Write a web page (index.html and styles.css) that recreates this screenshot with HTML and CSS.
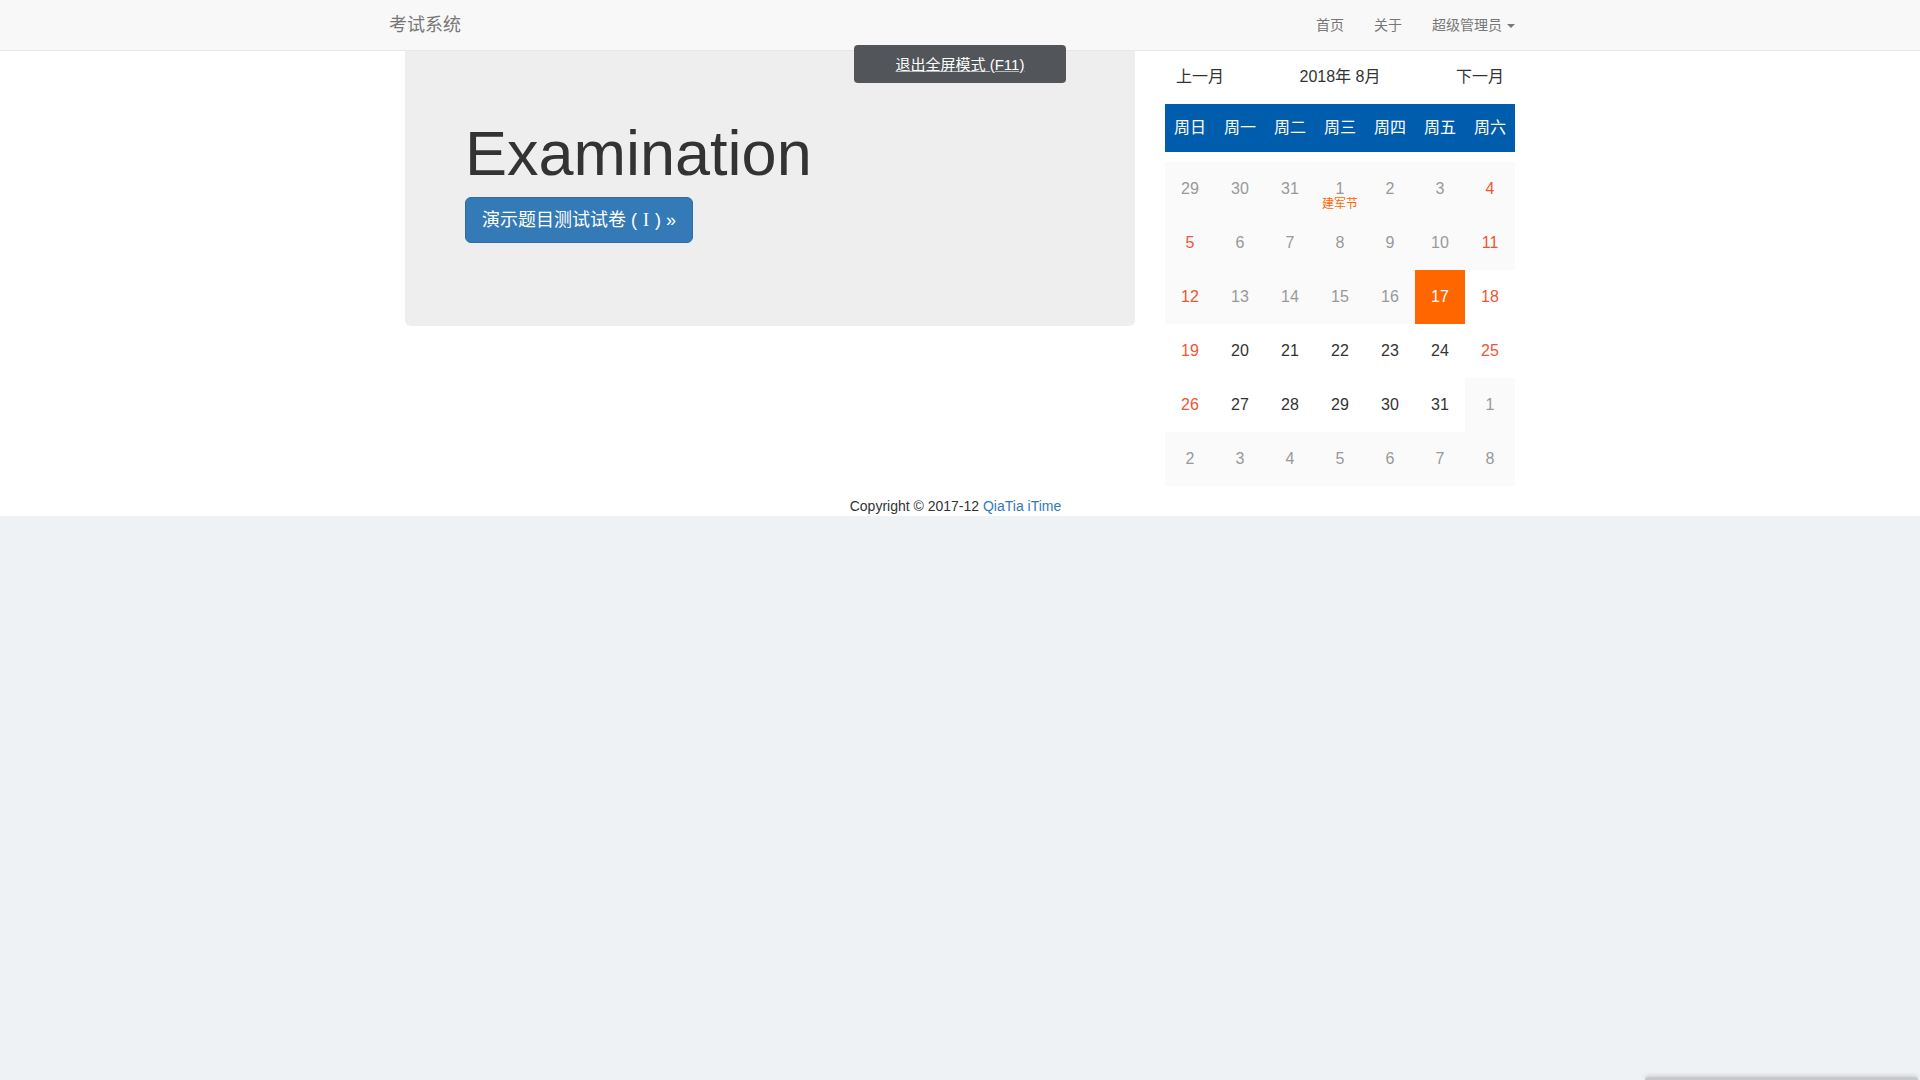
FILE: index.html
```html
<!DOCTYPE html>
<html lang="zh-CN">
<head>
<meta charset="utf-8">
<title>考试系统</title>
<link rel="stylesheet" href="styles.css">
</head>
<body>
<nav class="navbar">
  <div class="nav-inner">
    <a class="brand" href="#">考试系统</a>
    <ul class="nav-right">
      <li><a href="#">首页</a></li>
      <li><a href="#">关于</a></li>
      <li><a href="#">超级管理员 <span class="caret"></span></a></li>
    </ul>
  </div>
</nav>

<a class="exit-fs" href="#">退出全屏模式 (F11)</a>

<main class="page">
  <div class="row">
    <section class="jumbotron">
      <h1>Examination</h1>
      <a class="btn-primary" href="#">演示题目测试试卷 ( <span class="roman">I</span> ) »</a>
    </section>

    <aside class="calendar">
      <div class="cal-head">
        <a href="#">上一月</a>
        <span>2018年 8月</span>
        <a href="#">下一月</a>
      </div>
      <div class="cal-week">
        <span>周日</span><span>周一</span><span>周二</span><span>周三</span><span>周四</span><span>周五</span><span>周六</span>
      </div>
      <div class="cal-days">
        <div class="day past">29</div>
        <div class="day past">30</div>
        <div class="day past">31</div>
        <div class="day past">1<span class="fest">建军节</span></div>
        <div class="day past">2</div>
        <div class="day past">3</div>
        <div class="day past wkend">4</div>

        <div class="day past wkend">5</div>
        <div class="day past">6</div>
        <div class="day past">7</div>
        <div class="day past">8</div>
        <div class="day past">9</div>
        <div class="day past">10</div>
        <div class="day past wkend">11</div>

        <div class="day past wkend">12</div>
        <div class="day past">13</div>
        <div class="day past">14</div>
        <div class="day past">15</div>
        <div class="day past">16</div>
        <div class="day today">17</div>
        <div class="day wkend">18</div>

        <div class="day wkend">19</div>
        <div class="day">20</div>
        <div class="day">21</div>
        <div class="day">22</div>
        <div class="day">23</div>
        <div class="day">24</div>
        <div class="day wkend">25</div>

        <div class="day wkend">26</div>
        <div class="day">27</div>
        <div class="day">28</div>
        <div class="day">29</div>
        <div class="day">30</div>
        <div class="day">31</div>
        <div class="day past">1</div>

        <div class="day past">2</div>
        <div class="day past">3</div>
        <div class="day past">4</div>
        <div class="day past">5</div>
        <div class="day past">6</div>
        <div class="day past">7</div>
        <div class="day past">8</div>
      </div>
    </aside>
  </div>

  <footer class="footer">Copyright © 2017-12 <a href="#">QiaTia iTime</a></footer>
</main>

<div class="dock"></div>
</body>
</html>
```

FILE: styles.css
```css
* { box-sizing: border-box; }

html, body {
  margin: 0;
  padding: 0;
}

body {
  background: #eff2f5;
  font-family: "Liberation Sans", "Noto Sans CJK SC", sans-serif;
  font-size: 14px;
  line-height: 1.42857;
  color: #333;
  min-height: 1080px;
}

a { text-decoration: none; }

/* navbar */
.navbar {
  background: #f8f8f8;
  border-bottom: 1px solid #e7e7e7;
  height: 51px;
}

.nav-inner {
  width: 1170px;
  margin: 0 auto;
  display: flex;
  justify-content: space-between;
  align-items: center;
  height: 50px;
}

.brand {
  font-size: 18px;
  line-height: 50px;
  color: #777;
  padding-left: 14px;
}

.nav-right {
  list-style: none;
  margin: 0;
  padding: 0 15px 0 0;
  display: flex;
}

.nav-right a {
  display: block;
  padding: 0 15px;
  line-height: 50px;
  color: #777;
  font-size: 14px;
}

.caret {
  display: inline-block;
  width: 0;
  height: 0;
  margin-left: 1px;
  vertical-align: middle;
  border-top: 4px solid #777;
  border-left: 4px solid transparent;
  border-right: 4px solid transparent;
}

/* fullscreen hint overlay */
.exit-fs {
  position: fixed;
  top: 45px;
  left: 50%;
  transform: translateX(-50%);
  width: 212px;
  height: 38px;
  background: #52565b;
  border-radius: 4px;
  color: #fff;
  font-size: 15px;
  line-height: 39px;
  text-align: center;
  text-decoration: underline;
  text-decoration-color: #b8b8b8;
  z-index: 10;
}

/* page */
.page {
  background: #fff;
}

.row {
  width: 1110px;
  margin: 0 auto;
  display: flex;
  align-items: flex-start;
  gap: 30px;
}

.jumbotron {
  width: 730px;
  background: #eee;
  border-radius: 0 0 6px 6px;
  padding: 48px 60px 83px;
}

.jumbotron h1 {
  margin: 20px 0 9px;
  font-size: 63px;
  font-weight: 400;
  line-height: 1.1;
  color: #333;
}

.btn-primary {
  display: inline-block;
  padding: 10px 16px;
  font-size: 18px;
  line-height: 24px;
  color: #fff;
  background: #337ab7;
  border: 1px solid #2e6da4;
  border-radius: 6px;
}

.roman {
  font-family: "Liberation Serif", serif;
  margin: 0 1px;
}

/* calendar */
.calendar {
  width: 350px;
}

.cal-head {
  height: 53px;
  display: flex;
  justify-content: space-between;
  align-items: center;
  padding: 0 11px;
  font-size: 16px;
}

.cal-head a,
.cal-head span {
  color: #333;
}

.cal-week {
  height: 48px;
  background: #005cac;
  display: grid;
  grid-template-columns: repeat(7, 1fr);
  align-items: center;
  text-align: center;
  color: #fff;
  font-size: 16px;
}

.cal-days {
  margin-top: 10px;
  display: grid;
  grid-template-columns: repeat(7, 50px);
  grid-auto-rows: 54px;
}

.day {
  position: relative;
  text-align: center;
  line-height: 54px;
  font-size: 16px;
  color: #333;
  background: #fff;
}

.day.past {
  background: #fafafa;
  color: #999;
}

.day.wkend {
  color: #ee5533;
}

.day.today {
  background: #ff6600;
  color: #fff;
}

.fest {
  position: absolute;
  left: 0;
  right: 0;
  top: 35px;
  font-size: 12px;
  line-height: 14px;
  color: #ff6600;
}

/* footer */
.footer {
  margin-top: 10px;
  padding-right: 9px;
  text-align: center;
  font-size: 14px;
  line-height: 20px;
  color: #333;
}

.footer a {
  color: #337ab7;
}

/* docked widget at bottom right */
.dock {
  position: fixed;
  right: 2px;
  bottom: 0;
  width: 273px;
  height: 3px;
  background: #c6c8ca;
  border-radius: 3px 3px 0 0;
  box-shadow: 0 -1px 4px rgba(0, 0, 0, 0.2);
}
```
